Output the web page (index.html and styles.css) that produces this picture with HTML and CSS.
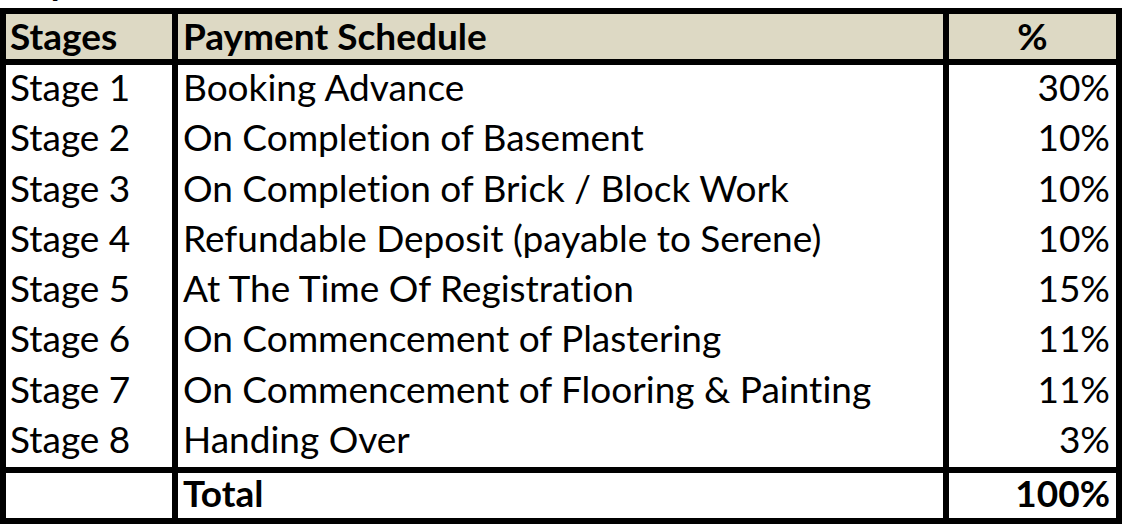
FILE: index.html
```html
<!DOCTYPE html>
<html>
<head>
<meta charset="utf-8">
<link rel="stylesheet" href="styles.css">
</head>
<body>
<div class="title"><span class="title-text">Payment Plan</span></div>
<table class="schedule">
  <thead>
    <tr>
      <th class="c1">Stages</th>
      <th class="c2">Payment Schedule</th>
      <th class="c3">%</th>
    </tr>
  </thead>
  <tbody>
    <tr><td class="c1">Stage 1</td><td class="c2">Booking Advance</td><td class="c3">30%</td></tr>
    <tr><td class="c1">Stage 2</td><td class="c2">On Completion of Basement</td><td class="c3">10%</td></tr>
    <tr><td class="c1">Stage 3</td><td class="c2">On Completion of Brick / Block Work</td><td class="c3">10%</td></tr>
    <tr><td class="c1">Stage 4</td><td class="c2">Refundable Deposit (payable to Serene)</td><td class="c3">10%</td></tr>
    <tr><td class="c1">Stage 5</td><td class="c2">At The Time Of Registration</td><td class="c3">15%</td></tr>
    <tr><td class="c1">Stage 6</td><td class="c2">On Commencement of Plastering</td><td class="c3">11%</td></tr>
    <tr><td class="c1">Stage 7</td><td class="c2">On Commencement of Flooring &amp; Painting</td><td class="c3">11%</td></tr>
    <tr class="last"><td class="c1">Stage 8</td><td class="c2">Handing Over</td><td class="c3">3%</td></tr>
  </tbody>
  <tfoot>
    <tr><td class="c1"></td><td class="c2">Total</td><td class="c3">100%</td></tr>
  </tfoot>
</table>
</body>
</html>
```
FILE: styles.css
```css
html, body {
  margin: 0;
  padding: 0;
  background: #fff;
}
body {
  font-family: Lato, "Liberation Sans", sans-serif;
  color: #000;
  font-size: 37px;
  font-variant-ligatures: none;
}
.title {
  height: 8px;
  overflow: hidden;
  padding-left: 8px;
}
.title-text {
  display: block;
  font-weight: 700;
  line-height: 40px;
  margin-top: -39px;
}
.schedule {
  width: 1122px;
  table-layout: fixed;
  border-collapse: separate;
  border-spacing: 0;
  border-left: 6px solid #000;
  border-top: 6px solid #000;
}
.schedule th,
.schedule td {
  box-sizing: border-box;
  padding: 0;
  vertical-align: top;
  line-height: 36px;
  white-space: nowrap;
}
.schedule .c1 { width: 172px; border-right: 6px solid #000; padding-left: 4px; text-align: left; }
.schedule .c2 { width: 771px; border-right: 6px solid #000; padding-left: 5px; text-align: left; }
.schedule .c3 { width: 173px; border-right: 6px solid #000; padding-right: 6px; text-align: right; }

.schedule thead th {
  height: 51px;
  background: #ddd9c4;
  border-bottom: 6px solid #000;
  font-weight: 700;
  padding-top: 4px;
}
.schedule thead th.c3 {
  text-align: center;
  padding-right: 0;
}
.schedule tbody td {
  height: 50.25px;
  padding-top: 4px;
}
.schedule tbody tr.last td {
  height: 56.25px;
  border-bottom: 6px solid #000;
}
.schedule tfoot td {
  height: 51px;
  border-bottom: 6px solid #000;
  font-weight: 700;
  padding-top: 2px;
}
```
